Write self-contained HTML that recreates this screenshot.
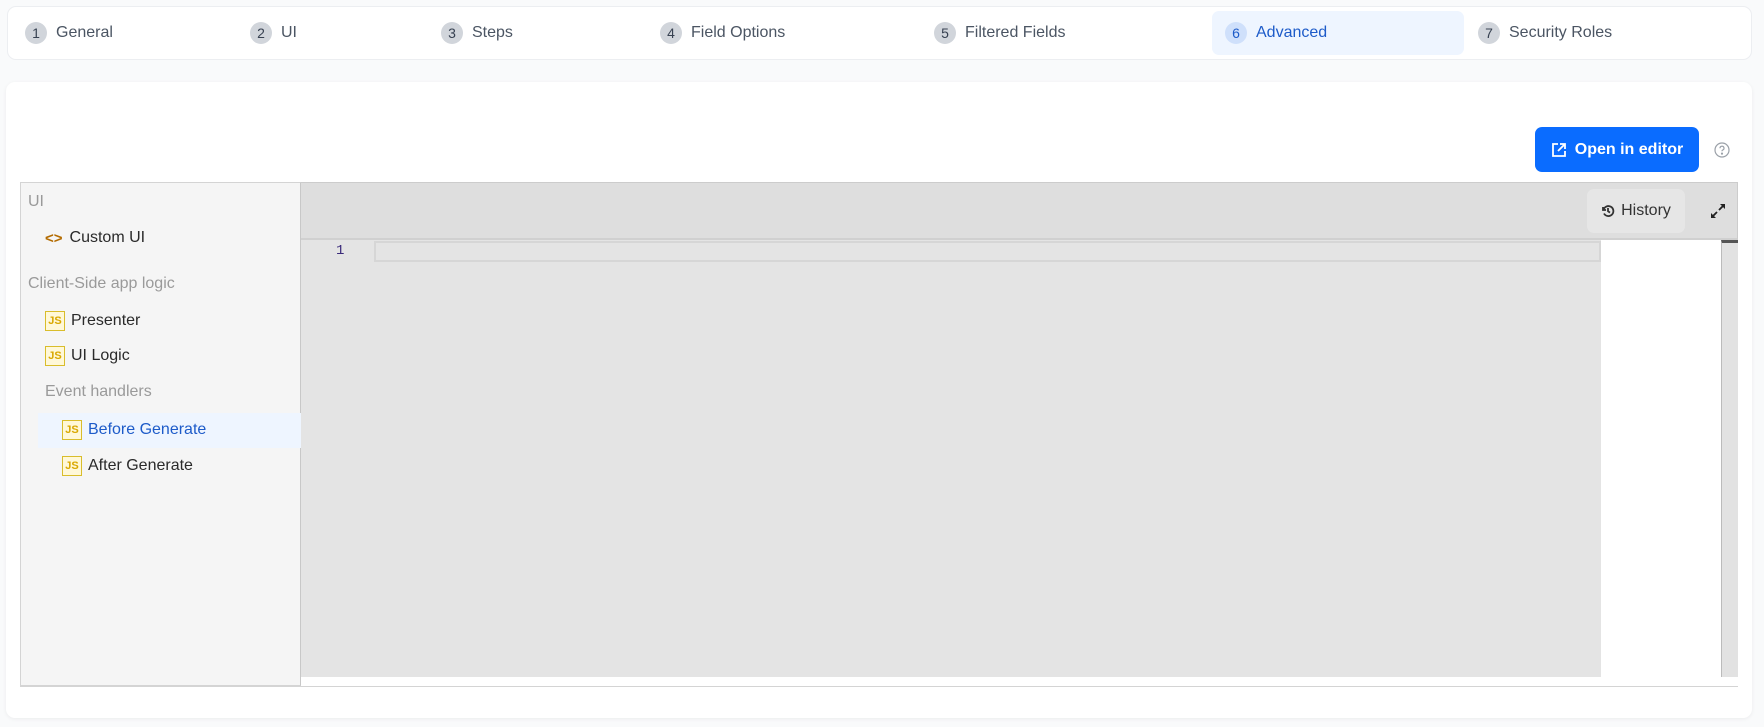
<!DOCTYPE html>
<html><head><style>
*{box-sizing:border-box;margin:0;padding:0}
body{width:1764px;height:727px;background:#f9fafb;font-family:"Liberation Sans",sans-serif;position:relative;overflow:hidden}
.abs{position:absolute}
.tabs{left:7px;top:6px;width:1745px;height:54px;background:#fff;border:1px solid #eceef1;border-radius:9px}
.tab{position:absolute;top:0;height:52px;display:flex;align-items:center;font-size:16px;color:#4b5563}
.c{width:22px;height:22px;border-radius:50%;background:#d1d5db;display:flex;align-items:center;justify-content:center;font-size:14px;line-height:22px;color:#374151;margin-right:9px}
.card{left:6px;top:82px;width:1746px;height:636px;background:#fff;border-radius:9px;box-shadow:0 1px 4px rgba(0,0,0,.06)}
.side{left:20px;top:182px;width:281px;height:504px;background:#f5f5f5;border:1px solid #d4d4d4;border-right:1px solid #c8c8c8}
.it{position:absolute;font-size:16px;color:#2a2a2a;display:flex;align-items:center;height:20px}
.gr{color:#9a9a9a}
.js{width:20px;height:20px;border:1.5px solid #d9bd2b;color:#d9a800;font-weight:bold;font-size:11px;display:flex;align-items:center;justify-content:center;margin-right:6px;background:#fff8d8}
</style></head><body>
<div class="abs tabs">
 <div class="tab" style="left:17px"><span class="c">1</span>General</div>
 <div class="tab" style="left:242px"><span class="c">2</span>UI</div>
 <div class="tab" style="left:433px"><span class="c">3</span>Steps</div>
 <div class="tab" style="left:652px"><span class="c">4</span>Field Options</div>
 <div class="tab" style="left:926px"><span class="c">5</span>Filtered Fields</div>
 <div style="position:absolute;left:1204px;top:4px;width:252px;height:44px;background:#eef5ff;border-radius:7px"></div>
 <div class="tab" style="left:1217px;color:#1d5bc9"><span class="c" style="background:#cfe0fb;color:#1d5bc9">6</span>Advanced</div>
 <div class="tab" style="left:1470px"><span class="c">7</span>Security Roles</div>
</div>
<div class="abs card"></div>
<div class="abs" style="left:1535px;top:127px;width:164px;height:45px;background:#0a6cff;border-radius:7px;color:#fff;font-weight:bold;font-size:16px;display:flex;align-items:center;justify-content:center">
<svg width="16" height="16" viewBox="0 0 16 16" style="margin-right:8px" fill="none" stroke="#fff" stroke-width="1.8"><path d="M7 2H2v12h12V9M9 2h5v5M14 2L7 9"/></svg>Open in editor</div>
<svg class="abs" style="left:1714px;top:142px" width="16" height="16" viewBox="0 0 16 16" fill="none" stroke="#9aa0a8" stroke-width="1.2"><circle cx="8" cy="8" r="7"/><path d="M6 6.2a2 2 0 1 1 2.6 1.9c-.5.2-.6.6-.6 1.2"/><circle cx="8" cy="11.6" r=".5" fill="#9aa0a8"/></svg>
<div class="abs side">
 <div class="it gr" style="left:7px;top:9px">UI</div>
 <div class="it" style="left:24px;top:45px"><span style="color:#b36b00;font-weight:bold;margin-right:7px;font-size:15px">&lt;&gt;</span>Custom UI</div>
 <div class="it gr" style="left:7px;top:91px">Client-Side app logic</div>
 <div class="it" style="left:24px;top:128px"><span class="js">JS</span>Presenter</div>
 <div class="it" style="left:24px;top:163px"><span class="js">JS</span>UI Logic</div>
 <div class="it gr" style="left:24px;top:199px">Event handlers</div>
 <div style="position:absolute;left:17px;top:230px;width:263px;height:35px;background:#eef5ff"></div>
 <div class="it" style="left:41px;top:237px;color:#1d5bc9"><span class="js">JS</span>Before Generate</div>
 <div class="it" style="left:41px;top:273px"><span class="js">JS</span>After Generate</div>
</div>
<div class="abs" style="left:301px;top:182px;width:1437px;height:58px;background:#dedede;border-top:1px solid #ccc;border-right:1px solid #ccc;border-bottom:2px solid #d0d0d0"></div>
<div class="abs" style="left:1587px;top:189px;width:98px;height:44px;background:#e6e6e6;border-radius:7px;display:flex;align-items:center;justify-content:center;font-size:16px;color:#333">
<svg width="14" height="14" viewBox="0 0 14 14" fill="none" stroke="#333" stroke-width="1.8" style="margin-right:6px"><path d="M2 3v3h3M2.5 6A5 5 0 1 1 3 9.5M7 4v3.2l2 1.4"/></svg>History</div>
<svg class="abs" style="left:1710px;top:203px" width="16" height="16" viewBox="0 0 16 16" fill="#222" stroke="#222" stroke-width="1.8"><path d="M9 7l5-5M2 14l5-5" /><path d="M10 1h5v5zM1 10v5h5z" stroke="none"/></svg>
<div class="abs" style="left:301px;top:240px;width:1300px;height:437px;background:#e4e4e4"></div>
<div class="abs" style="left:374px;top:241px;width:1227px;height:21px;border:2px solid #d6d6d6"></div>
<div class="abs" style="left:336px;top:243px;font-family:'Liberation Mono',monospace;font-size:14px;color:#3a2a7a">1</div>
<div class="abs" style="left:1601px;top:240px;width:120px;height:437px;background:#fff"></div>
<div class="abs" style="left:1721px;top:240px;width:17px;height:437px;background:#e2e2e2;border-left:1px solid #bbb;border-top:3px solid #555"></div>
<div class="abs" style="left:301px;top:677px;width:1437px;height:9px;background:#fff"></div>
<div class="abs" style="left:20px;top:686px;width:1718px;height:1px;background:#d4d4d4"></div>
</body></html>
